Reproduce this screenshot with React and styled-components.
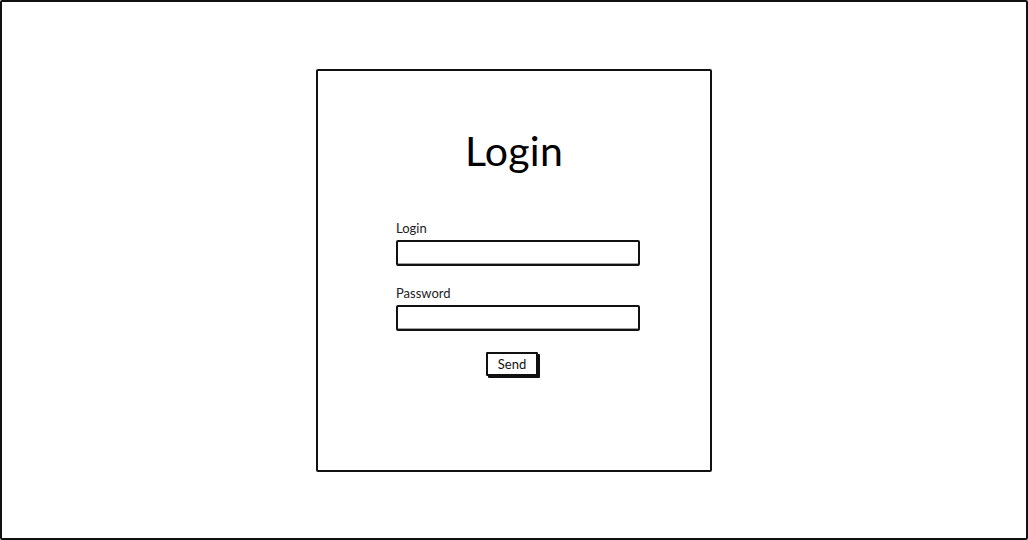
import React from 'react'
import styled, { createGlobalStyle } from 'styled-components'

const GlobalStyle = createGlobalStyle`
  html, body {
    margin: 0;
    padding: 0;
    background: #fff;
  }
  body {
    font-family: Lato, "Open Sans", sans-serif;
    color: #000;
  }
  * { box-sizing: border-box; }
`

const Frame = styled.div`
  width: 1028px;
  height: 540px;
  border: 2px solid #111;
  border-radius: 2px;
  display: flex;
  justify-content: center;
  align-items: center;
`

const Card = styled.div`
  width: 396px;
  height: 403px;
  border: 2px solid #111;
  border-radius: 2px;
  display: flex;
  flex-direction: column;
  padding: 56px 70px 0 78px;
`

const Title = styled.h1`
  margin: 0 0 46px -8px;
  font-size: 41px;
  font-weight: 400;
  line-height: 48px;
  text-align: center;
  letter-spacing: 0.3px;
`

const Field = styled.div`
  display: flex;
  flex-direction: column;
  margin-bottom: ${p => p.$gap || 0}px;
`

const Label = styled.label`
  font-size: 13px;
  line-height: 14px;
  margin-bottom: 5px;
  color: #222;
`

const Input = styled.div`
  width: 244px;
  height: 26px;
  border: 2px solid #111;
  border-radius: 2px;
  box-shadow: inset 0 -0.5px 0 #444;
`

const Row = styled.div`
  display: flex;
  justify-content: center;
  padding-right: 12px;
`

const Button = styled.button`
  width: 52px;
  height: 24px;
  padding: 0;
  border: 2px solid #111;
  border-radius: 1px;
  background: #fff;
  box-shadow: 2px 2px 0 #111;
  font-family: Lato, "Open Sans", sans-serif;
  font-size: 13px;
  color: #111;
`

export default function App() {
  return (
    <>
      <GlobalStyle />
      <Frame>
        <Card>
          <Title>Login</Title>
          <Field $gap={20}>
            <Label>Login</Label>
            <Input />
          </Field>
          <Field $gap={21}>
            <Label>Password</Label>
            <Input />
          </Field>
          <Row>
            <Button>Send</Button>
          </Row>
        </Card>
      </Frame>
    </>
  )
}
